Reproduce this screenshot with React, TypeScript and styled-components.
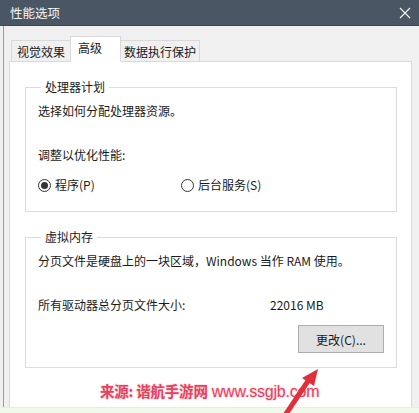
import React from "react";
import styled, { createGlobalStyle } from "styled-components";

const Global = createGlobalStyle`
  html, body { margin: 0; padding: 0; }
  body { font-family: "Noto Sans CJK SC", "Microsoft YaHei", sans-serif; font-size: 12px; color: #1a1a1a; }
`;

const Window = styled.div`
  position: relative;
  width: 419px;
  height: 413px;
  background: #f0f0f0;
  overflow: hidden;
  display: flex;
  flex-direction: column;
`;

const TitleBar = styled.div`
  height: 26px;
  flex: none;
  background: #4b5665;
  border-bottom: 1px solid #3e4753;
  box-sizing: border-box;
  display: flex;
  align-items: center;
  justify-content: space-between;
  padding: 0 7px 0 10px;
  color: #f4f6f8;
  font-size: 12.5px;
`;

const CloseBtn = styled.div`
  width: 14px;
  height: 14px;
  display: flex;
  align-items: center;
  justify-content: center;
`;

const Body = styled.div`
  flex: 1;
  display: flex;
  flex-direction: column;
  margin-left: 3px;
  border-left: 1px solid #9a9a9a;
  padding: 11px 7px 0 5px;
  min-height: 0;
`;

const TabRow = styled.div`
  display: flex;
  align-items: flex-end;
  height: 25px;
  padding-left: 2px;
  position: relative;
  z-index: 1;
  margin-bottom: -1px;
`;

const Tab = styled.div<{ $active?: boolean; $pad: string }>`
  box-sizing: border-box;
  height: ${(p) => (p.$active ? "26px" : "22px")};
  padding: ${(p) => p.$pad};
  display: flex;
  align-items: center;
  background: ${(p) => (p.$active ? "#ffffff" : "#f0f0f0")};
  border: 1px solid #d9d9d9;
  border-bottom: ${(p) => (p.$active ? "1px solid #ffffff" : "1px solid #d9d9d9")};
  margin-left: ${(p) => (p.$active ? "-1px" : "0")};
  margin-right: ${(p) => (p.$active ? "-1px" : "0")};
  position: relative;
  z-index: ${(p) => (p.$active ? 2 : 1)};
  white-space: nowrap;
`;

const Panel = styled.div`
  flex: 1;
  background: #ffffff;
  border: 1px solid #d9d9d9;
  border-bottom: none;
  padding: 17px 14px 0 15px;
  display: flex;
  flex-direction: column;
`;

const Group = styled.fieldset<{ $gap?: number }>`
  margin: ${(p) => p.$gap ?? 0}px 0 0 0;
  padding: 0 12px 0 12px;
  border: 1px solid #dcdcdc;
  min-width: 0;
`;

const Legend = styled.legend`
  padding: 0 4px;
  margin-left: 3px;
  line-height: 16px;
  font-size: 12px;
`;

const Line = styled.div<{ $top: number }>`
  line-height: 16px;
  margin-top: ${(p) => p.$top}px;
  white-space: nowrap;
`;

const RadioRow = styled.div`
  display: grid;
  grid-template-columns: 143px auto;
  margin-top: 14px;
  margin-bottom: 18px;
`;

const RadioItem = styled.label`
  display: flex;
  align-items: center;
  gap: 4px;
  line-height: 16px;
`;

const RadioCircle = styled.span<{ $checked?: boolean }>`
  width: 11px;
  height: 11px;
  border: 1px solid #333;
  border-radius: 50%;
  display: flex;
  align-items: center;
  justify-content: center;
  &::after {
    content: "";
    width: 7px;
    height: 7px;
    border-radius: 50%;
    background: ${(p) => (p.$checked ? "#333" : "transparent")};
  }
`;

const SizeRow = styled.div`
  display: grid;
  grid-template-columns: 232px auto;
  line-height: 16px;
  margin-top: 28px;
`;

const ButtonRow = styled.div`
  display: flex;
  justify-content: flex-end;
  margin-top: 12px;
  margin-bottom: 14px;
`;

const Button = styled.div`
  box-sizing: border-box;
  width: 86px;
  height: 28px;
  background: #e1e1e1;
  border: 1px solid #adadad;
  display: flex;
  align-items: center;
  justify-content: center;
`;

const GreenStrip = styled.div`
  height: 5px;
  flex: none;
  background: #effbe9;
  border-top: 1px solid #e4efe0;
`;

const Watermark = styled.div`
  position: absolute;
  left: 100px;
  top: 380px;
  font-size: 14.5px;
  font-weight: 700;
  color: #e8405c;
  white-space: nowrap;
  text-shadow: 1px 0 0 #fde2e6, -1px 0 0 #fde2e6, 0 1px 0 #fde2e6, 0 -1px 0 #fde2e6,
    1px 1px 0 #fff, -1px -1px 0 #fff, 1px -1px 0 #fff, -1px 1px 0 #fff;
  letter-spacing: -0.2px;
`;

const Url = styled.span`
  font-family: "Liberation Sans", Arial, sans-serif;
  font-weight: 400;
  font-size: 16px;
  margin-left: 4px;
`;

const Arrow = styled.svg`
  position: absolute;
  left: 276px;
  top: 364px;
`;

export default function App() {
  return (
    <>
      <Global />
      <Window>
        <TitleBar>
          <span>性能选项</span>
          <CloseBtn>
            <svg width="12" height="12" viewBox="0 0 12 12">
              <path d="M1 1L11 11M11 1L1 11" stroke="#f4f6f8" strokeWidth="1.1" />
            </svg>
          </CloseBtn>
        </TitleBar>
        <Body>
          <TabRow>
            <Tab $pad="0 5px 0 5px">视觉效果</Tab>
            <Tab $active $pad="0 18px 3px 7px">高级</Tab>
            <Tab $pad="0 3px 0 3px">数据执行保护</Tab>
          </TabRow>
          <Panel>
            <Group>
              <Legend>处理器计划</Legend>
              <Line $top={8}>选择如何分配处理器资源。</Line>
              <Line $top={28}>调整以优化性能:</Line>
              <RadioRow>
                <RadioItem>
                  <RadioCircle $checked />
                  程序(P)
                </RadioItem>
                <RadioItem>
                  <RadioCircle />
                  后台服务(S)
                </RadioItem>
              </RadioRow>
            </Group>
            <Group $gap={17}>
              <Legend>虚拟内存</Legend>
              <Line $top={8}>分页文件是硬盘上的一块区域，Windows 当作 RAM 使用。</Line>
              <SizeRow>
                <span>所有驱动器总分页文件大小:</span>
                <span>22016 MB</span>
              </SizeRow>
              <ButtonRow>
                <Button>更改(C)...</Button>
              </ButtonRow>
            </Group>
          </Panel>
        </Body>
        <GreenStrip />
        <Watermark>
          来源: 谐航手游网<Url>www.ssgjb.com</Url>
        </Watermark>
        <Arrow width="48" height="50" viewBox="0 0 48 50">
          <path d="M10 50 L34 14" stroke="#e0303c" strokeWidth="5" strokeLinecap="round" />
          <path d="M42 5 L26 14 L38 22 Z" fill="#e0303c" />
        </Arrow>
      </Window>
    </>
  );
}
